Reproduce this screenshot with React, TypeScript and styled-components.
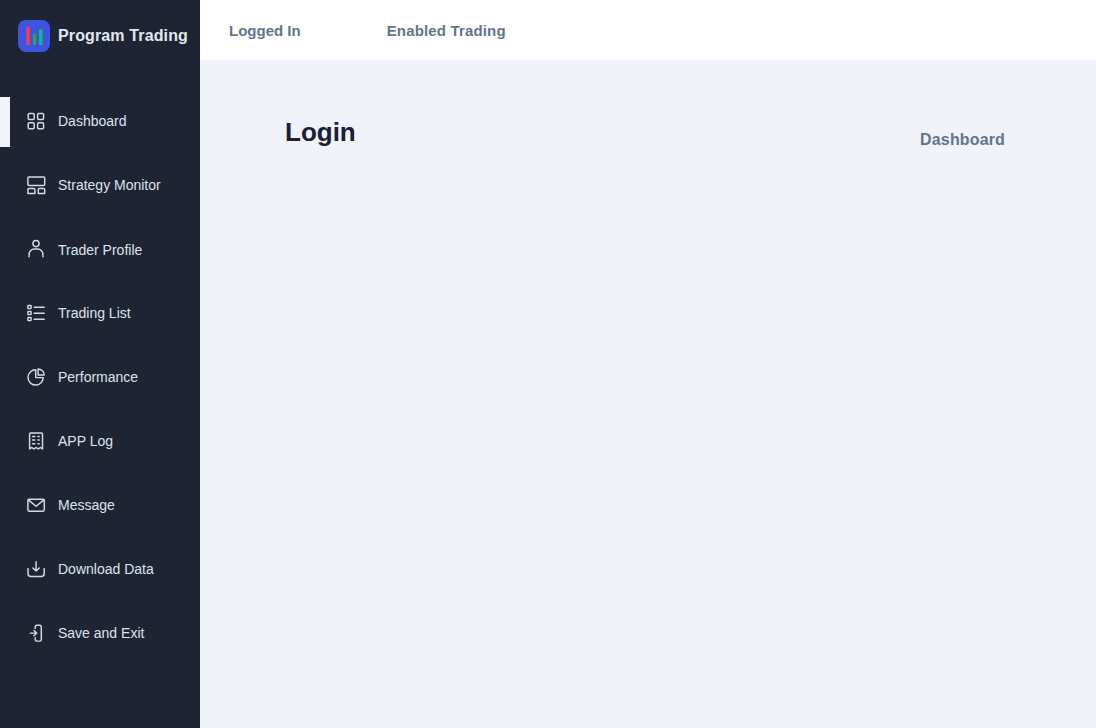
import React from "react";
import styled, { createGlobalStyle } from "styled-components";

const GlobalStyle = createGlobalStyle`
  * { box-sizing: border-box; }
  body { margin: 0; font-family: "Liberation Sans", Arial, sans-serif; }
`;

const Page = styled.div`
  display: flex;
  width: 100%;
  height: 100vh;
  background: #f0f3f9;
  overflow: hidden;
`;

const Sidebar = styled.aside`
  flex: 0 0 200px;
  background: #1e2433;
`;

const Brand = styled.div`
  display: flex;
  align-items: center;
  gap: 8px;
  height: 72px;
  padding-left: 18px;
`;

const BrandName = styled.span`
  color: #e2e8f4;
  font-size: 16px;
  font-weight: 700;
  letter-spacing: 0.13px;
  white-space: nowrap;
`;

const Nav = styled.nav`
  display: flex;
  flex-direction: column;
  gap: 14px;
  padding-top: 25px;
`;

const NavItem = styled.a<{ $active?: boolean }>`
  display: flex;
  align-items: center;
  gap: 12px;
  height: 50px;
  padding: 0 0 2px 16px;
  border-left: 10px solid ${(p) => (p.$active ? "#f1f5fa" : "transparent")};
  color: #dce3ee;
  font-size: 14px;
  white-space: nowrap;
`;

const NavLabel = styled.span<{ $drop?: number }>`
  line-height: 16px;
  padding-top: ${(p) => 2 * (p.$drop ?? 0)}px;
`;

const Icon = styled.svg`
  width: 20px;
  height: 20px;
  flex: none;
  fill: none;
  stroke: #d3dbe8;
  stroke-width: 1.45;
  stroke-linecap: round;
  stroke-linejoin: round;
`;

const Main = styled.main`
  flex: 1;
  min-width: 0;
`;

const TopBar = styled.header`
  display: flex;
  align-items: center;
  gap: 86px;
  height: 60px;
  padding: 2px 0 0 29px;
  background: #ffffff;
`;

const Status = styled.span<{ $spacing?: number }>`
  color: #64748b;
  font-size: 15px;
  font-weight: 700;
  line-height: 18px;
  letter-spacing: ${(p) => p.$spacing ?? 0}px;
`;

const TitleRow = styled.div`
  display: flex;
  justify-content: space-between;
  align-items: flex-start;
  padding: 57px 91px 0 85px;
`;

const Title = styled.h1`
  margin: 0;
  color: #1a2035;
  font-size: 26px;
  line-height: 30px;
  font-weight: 700;
`;

const Crumb = styled.span`
  margin-top: 14px;
  color: #64748b;
  font-size: 16px;
  line-height: 18px;
  font-weight: 700;
  letter-spacing: 0.15px;
`;

const items: { label: string; icon: React.ReactNode; drop?: number }[] = [
  {
    label: "Dashboard",
    icon: (
      <>
        <rect x="2.2" y="2.4" width="6" height="6" rx="1.2" />
        <rect x="11.6" y="2.4" width="6" height="6" rx="1.2" />
        <rect x="2.2" y="11.8" width="6" height="6" rx="1.2" />
        <rect x="11.6" y="11.8" width="6" height="6" rx="1.2" />
      </>
    ),
  },
  {
    label: "Strategy Monitor",
    icon: (
      <>
        <rect x="1.9" y="1.9" width="16.8" height="8.5" rx="1" />
        <path d="M1.9 18.5v-4q0-1 1-1h5q1 0 1 1v4zM12.3 18.5v-4q0-1 1-1h4.4q1 0 1 1v4z" />
      </>
    ),
  },
  {
    label: "Trader Profile",
    drop: 1,
    icon: (
      <>
        <circle cx="10" cy="4.6" r="3.1" />
        <path d="M3.1 17.7v-2.4a5.3 5.3 0 0 1 5.3-5.3h3.2a5.3 5.3 0 0 1 5.3 5.3v2.4" />
      </>
    ),
  },
  {
    label: "Trading List",
    icon: (
      <>
        <rect x="1.9" y="2.4" width="3.2" height="3.2" rx="0.5" />
        <rect x="1.9" y="8.4" width="3.2" height="3.2" rx="0.5" />
        <rect x="1.9" y="14.4" width="3.2" height="3.2" rx="0.5" />
        <path d="M8.2 4.2H18.2M8.2 10.2H18.2M8.2 16.2H18.2" />
      </>
    ),
  },
  {
    label: "Performance",
    icon: (
      <>
        <path d="M9.7 2.8A7.6 7.6 0 1 0 17.2 10.6H9.7z" />
        <path d="M12.1 1.9V8H18.2A6.1 6.1 0 0 0 12.1 1.9z" />
      </>
    ),
  },
  {
    label: "APP Log",
    icon: (
      <>
        <path d="M3.6 3q0-1 1-1h10.9q1 0 1 1v14.9l-2.1-1.4-2.1 1.4-2.2-1.4-2.2 1.4-2.2-1.4-2.1 1.4z" />
        <path d="M6.6 5.4h2.2M12 5.4h1.2M6.6 9h2.2M12 9h1.2M6.6 12.7h2.2M12 12.7h1.2" />
      </>
    ),
  },
  {
    label: "Message",
    icon: (
      <>
        <rect x="1.9" y="4.2" width="16.4" height="12" rx="1.4" />
        <path d="M2.3 4.9L10.1 11.3L17.9 4.9" />
      </>
    ),
  },
  {
    label: "Download Data",
    icon: (
      <>
        <path d="M2 9.4v5q0 3 3 3h10.2q3 0 3-3v-5" />
        <path d="M10.1 2.6v9.4M6.9 8.9l3.2 3.2 3.2-3.2" />
      </>
    ),
  },
  {
    label: "Save and Exit",
    icon: (
      <>
        <path d="M9.2 5.4V4q0-1.7 1.7-1.7h2.7q1.7 0 1.7 1.7v12.4q0 1.7-1.7 1.7h-2.7q-1.7 0-1.7-1.7v-1.6" />
        <path d="M4.2 10.1h6.3M8 7.4l2.7 2.7L8 12.8" />
      </>
    ),
  },
];

const Logo = () => (
  <svg width="32" height="32" viewBox="0 0 32 32">
    <rect width="32" height="32" rx="8" fill="#3e53e0" />
    <rect x="8.2" y="6.7" width="3.6" height="18.6" rx="1.5" fill="#f23e46" />
    <rect x="14.8" y="13.3" width="3.4" height="12" rx="1.5" fill="#2f9e68" />
    <rect x="21" y="9" width="3.5" height="16.3" rx="1.5" fill="#12b981" />
  </svg>
);

export default function App() {
  return (
    <Page>
      <GlobalStyle />
      <Sidebar>
        <Brand>
          <Logo />
          <BrandName>Program Trading</BrandName>
        </Brand>
        <Nav>
          {items.map((item, i) => (
            <NavItem key={item.label} $active={i === 0}>
              <Icon viewBox="0 0 20 20">{item.icon}</Icon>
              <NavLabel $drop={item.drop}>{item.label}</NavLabel>
            </NavItem>
          ))}
        </Nav>
      </Sidebar>
      <Main>
        <TopBar>
          <Status>Logged In</Status>
          <Status $spacing={0.16}>Enabled Trading</Status>
        </TopBar>
        <TitleRow>
          <Title>Login</Title>
          <Crumb>Dashboard</Crumb>
        </TitleRow>
      </Main>
    </Page>
  );
}
